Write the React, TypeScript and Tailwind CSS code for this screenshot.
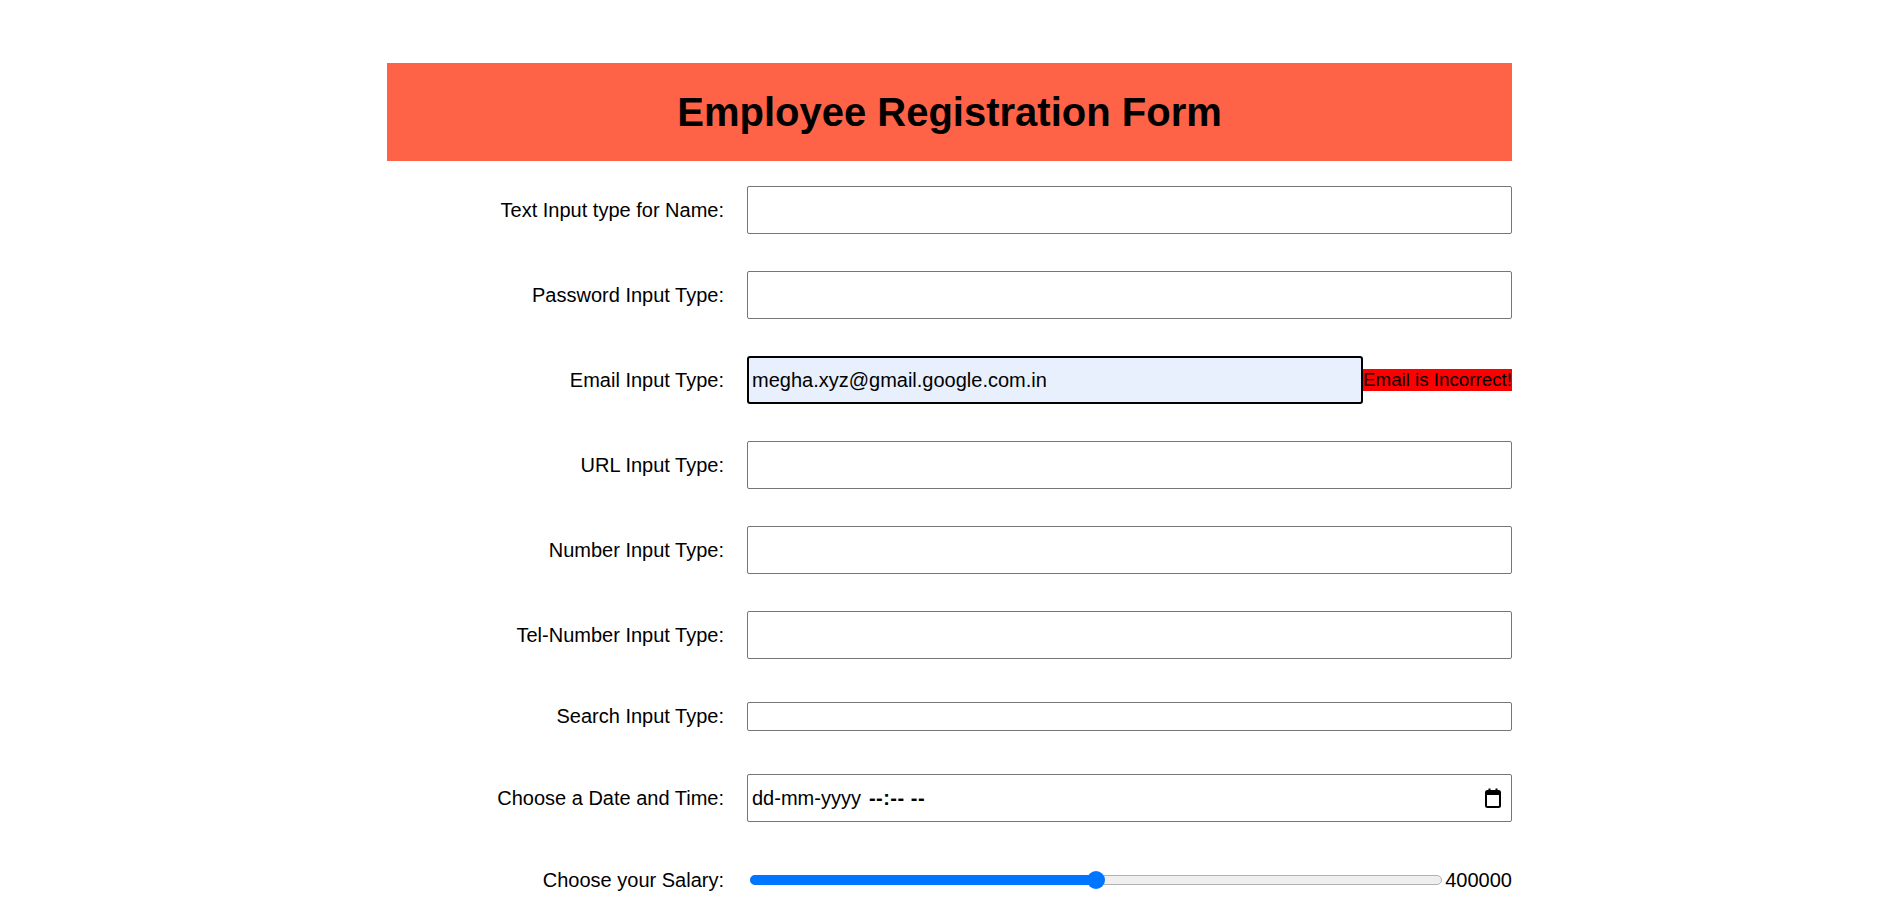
import React from "react";

const font = { fontFamily: '"Liberation Sans", Arial, sans-serif' };

function Label({ children }: { children: React.ReactNode }) {
  return (
    <div className="w-[337px] shrink-0 text-right text-[20px] leading-[23px] text-black pr-0">
      {children}
    </div>
  );
}

function Box({ className = "" }: { className?: string }) {
  return (
    <div
      className={`flex-1 h-[48px] border border-[#767676] rounded-[2px] bg-white ${className}`}
    />
  );
}

function Row({
  label,
  children,
  className = "h-[48px]",
}: {
  label: string;
  children: React.ReactNode;
  className?: string;
}) {
  return (
    <div className={`flex items-center gap-[23px] ${className}`}>
      <Label>{label}</Label>
      <div className="flex-1 flex items-center h-full min-w-0">{children}</div>
    </div>
  );
}

export default function App() {
  return (
    <div className="min-h-[920px] bg-white" style={font}>
      <div className="pl-[387px] pt-[63px]">
        <div className="w-[1125px]">
          <div className="h-[98px] bg-[#ff6347] flex items-center justify-center">
            <h1 className="text-[40px] font-bold text-black leading-none">
              Employee Registration Form
            </h1>
          </div>
          <div className="mt-[25px] flex flex-col gap-[37px]">
            <Row label="Text Input type for Name:">
              <Box />
            </Row>
            <Row label="Password Input Type:">
              <Box />
            </Row>
            <Row label="Email Input Type:">
              <div className="flex-1 h-[48px] border-2 border-black rounded-[3px] bg-[#e8f0fe] flex items-center pl-[3px] text-[20px] text-black">
                megha.xyz@gmail.google.com.in
              </div>
              <span className="bg-[#ff0000] text-black text-[18.75px] leading-[22px] whitespace-nowrap">
                Email is Incorrect!
              </span>
            </Row>
            <Row label="URL Input Type:">
              <Box />
            </Row>
            <Row label="Number Input Type:">
              <Box />
            </Row>
            <Row label="Tel-Number Input Type:">
              <Box />
            </Row>
            <Row label="Search Input Type:" className="h-[41px]">
              <div className="flex-1 h-[29px] border border-[#767676] rounded-[2px] bg-white" />
            </Row>
            <Row label="Choose a Date and Time:">
              <div className="flex-1 h-[48px] border border-[#767676] rounded-[2px] bg-white flex items-center pl-[4px] pr-[10px] text-[20px] text-black">
                <span>dd-mm-yyyy</span>
                <span className="ml-[8px] font-bold tracking-[0.5px]">--:-- --</span>
                <span className="flex-1" />
                <svg width="16" height="20" viewBox="0 0 16 20">
                  <rect x="1" y="3" width="14" height="16" rx="1.5" fill="none" stroke="#000" strokeWidth="2" />
                  <rect x="1" y="3" width="14" height="4" fill="#000" />
                  <rect x="3.5" y="0.5" width="2" height="4" fill="#000" />
                  <rect x="10.5" y="0.5" width="2" height="4" fill="#000" />
                </svg>
              </div>
            </Row>
            <Row label="Choose your Salary:" className="h-[42px]">
              <div className="flex-1 relative h-[20px] ml-[3px] mr-[3px]">
                <div className="absolute left-0 right-0 top-[5px] h-[10px] rounded-full bg-[#efefef] border border-[#b2b2b2]" />
                <div className="absolute left-0 top-[5px] h-[10px] rounded-full bg-[#0075ff] w-[50%]" />
                <div className="absolute top-[1px] left-[50%] -ml-[9px] w-[18px] h-[18px] rounded-full bg-[#0075ff]" />
              </div>
              <span className="text-[20px] text-black leading-[23px]">400000</span>
            </Row>
          </div>
        </div>
      </div>
    </div>
  );
}
